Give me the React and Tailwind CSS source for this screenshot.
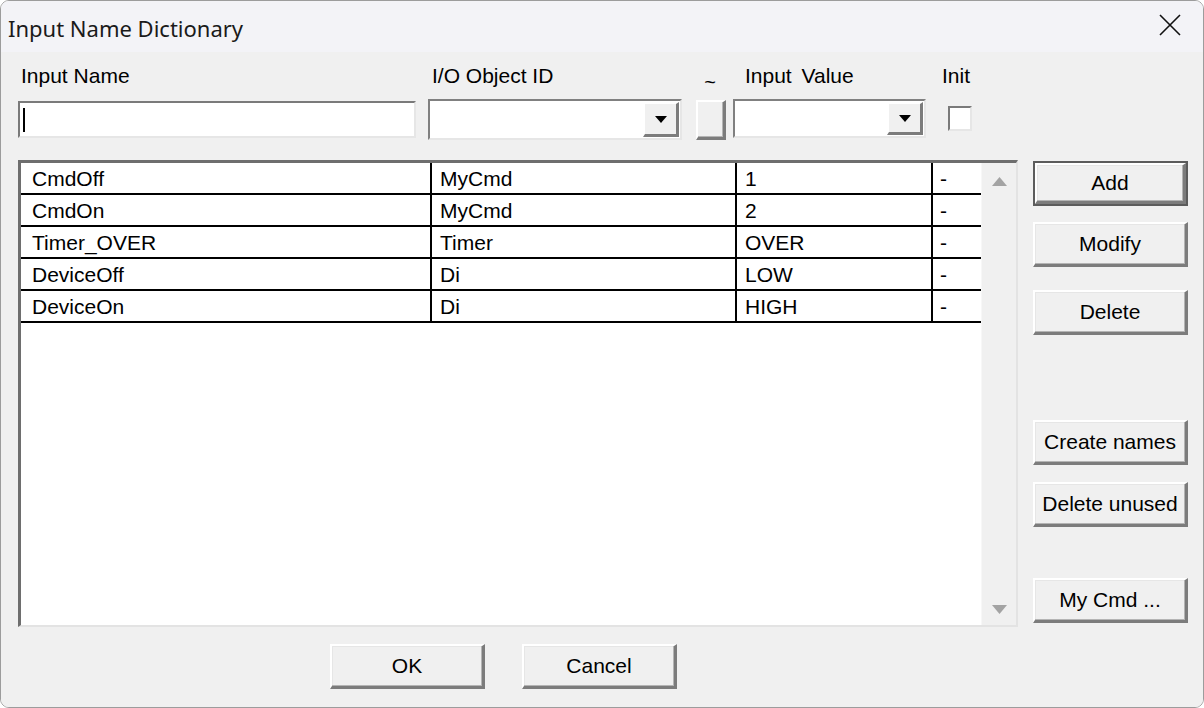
import React from 'react';

const font = { fontFamily: '"Liberation Sans", Arial, sans-serif' };

const rows = [
    ['CmdOff', 'MyCmd', '1', '-'],
    ['CmdOn', 'MyCmd', '2', '-'],
    ['Timer_OVER', 'Timer', 'OVER', '-'],
    ['DeviceOff', 'Di', 'LOW', '-'],
    ['DeviceOn', 'Di', 'HIGH', '-'],
];

function Button({ children, isDefault, className = '' }) {
    return (
        <div
            className={`w-[155px] h-[45px] shrink-0 ${isDefault ? 'border-2 border-[#5c5c5c]' : ''} ${className}`}
        >
            <div className="w-full h-full border-t-2 border-l-2 border-b-[3px] border-r-[3px] border-t-white border-l-white border-b-[#7c7c7c] border-r-[#7c7c7c] bg-[#f0f0f0] flex items-center justify-center text-[21px] text-black shadow-[inset_-1px_-1px_0_#b4b4b4,inset_1px_1px_0_#e6e6e6]">
                {children}
            </div>
        </div>
    );
}

function Arrow({ color = '#000', up = false, w = 12, h = 7 }) {
    return (
        <svg width={w} height={h} viewBox={`0 0 ${w} ${h}`}>
            <path d={up ? `M0 ${h} L${w / 2} 0 L${w} ${h} Z` : `M0 0 L${w} 0 L${w / 2} ${h} Z`} fill={color} />
        </svg>
    );
}

function Combo({ width, height }) {
    return (
        <div
            className="border-t-2 border-l-2 border-t-[#808080] border-l-[#808080] border-b-2 border-r-2 border-b-[#e6e6e6] border-r-[#e6e6e6] bg-white flex justify-end p-[1px]"
            style={{ width, height }}
        >
            <div className="w-[36px] h-full border-t-2 border-l-2 border-t-white border-l-white border-b-[3px] border-r-[3px] border-b-[#7c7c7c] border-r-[#7c7c7c] bg-[#f0f0f0] flex items-center justify-center">
                <Arrow />
            </div>
        </div>
    );
}

export default function App() {
    return (
        <div className="w-[1204px] h-[708px] bg-white" style={font}>
            <div className="w-full h-full border border-[#9c9c9c] rounded-[9px] overflow-hidden flex flex-col">
                {/* Title bar */}
                <div className="h-[51px] shrink-0 bg-[#f3f3f7] flex items-center justify-between pl-[7px] pr-[22px]">
                    <span
                        className="text-[22px] text-[#1a1a1a] pt-[4px]"
                        style={{ fontFamily: '"Noto Sans", "Open Sans", sans-serif' }}
                    >
                        Input Name Dictionary
                    </span>
                    <svg width="22" height="22" viewBox="0 0 22 22" className="mb-[4px]">
                        <path d="M1 1 L21 21 M21 1 L1 21" stroke="#111" strokeWidth="1.6" />
                    </svg>
                </div>

                {/* Body */}
                <div className="flex-1 bg-[#f0f0f0] flex flex-col">
                    {/* Top fields */}
                    <div className="h-[108px] shrink-0 flex pt-[12px] pl-[17px] text-[21px] text-black leading-[24px]">
                        <div className="w-[398px] flex flex-col">
                            <span className="pl-[3px]">Input Name</span>
                            <div className="mt-[13px] h-[37px] border-t-2 border-l-2 border-t-[#7a7a7a] border-l-[#7a7a7a] border-b-2 border-r-2 border-b-[#e6e6e6] border-r-[#e6e6e6] bg-white flex items-center pl-[3px]">
                                <div className="w-[2px] h-[24px] bg-black" />
                            </div>
                        </div>
                        <div className="ml-[12px] w-[254px] flex flex-col">
                            <span className="pl-[4px]">I/O Object ID</span>
                            <div className="mt-[11px]">
                                <Combo width={254} height={41} />
                            </div>
                        </div>
                        <div className="ml-[14px] w-[30px] flex flex-col items-center">
                            <span className="text-[20px] h-[24px] pt-[6px] pr-[2px]">~</span>
                            <div className="mt-[12px] w-[30px] h-[40px] border-t-2 border-l-2 border-t-white border-l-white border-b-[3px] border-r-[3px] border-b-[#7c7c7c] border-r-[#7c7c7c] bg-[#f0f0f0] shadow-[inset_-1px_-1px_0_#b4b4b4]" />
                        </div>
                        <div className="ml-[7px] w-[193px] flex flex-col">
                            <span className="pl-[12px]" style={{ wordSpacing: '4px' }}>Input Value</span>
                            <div className="mt-[11px]">
                                <Combo width={193} height={39} />
                            </div>
                        </div>
                        <div className="ml-[16px] flex flex-col">
                            <span>Init</span>
                            <div className="mt-[18px] ml-[6px] w-[24px] h-[25px] border-t-2 border-l-2 border-t-[#7a7a7a] border-l-[#7a7a7a] border-b-2 border-r-2 border-b-[#e6e6e6] border-r-[#e6e6e6] bg-white" />
                        </div>
                    </div>

                    {/* List and side buttons */}
                    <div className="flex pl-[17px] text-[21px] text-black">
                        <div className="w-[1000px] h-[467px] border-t-[3px] border-l-[3px] border-t-[#6e6e6e] border-l-[#6e6e6e] border-b-2 border-r-2 border-b-[#e3e3e3] border-r-[#e3e3e3] flex">
                            <div className="flex-1 bg-white">
                                {rows.map((r, i) => (
                                    <div key={i} className="h-[32px] border-b-2 border-black grid grid-cols-[411px_305px_196px_1fr]">
                                        <div className="border-r-2 border-black pl-[11px] flex items-center">{r[0]}</div>
                                        <div className="border-r-2 border-black pl-[8px] flex items-center">{r[1]}</div>
                                        <div className="border-r-2 border-black pl-[8px] flex items-center">{r[2]}</div>
                                        <div className="pl-[7px] flex items-center">{r[3]}</div>
                                    </div>
                                ))}
                            </div>
                            <div className="w-[35px] bg-[#f0f0f0] border-l border-[#f7f7f7] flex flex-col items-center justify-between pt-[14px] pb-[11px]">
                                <Arrow up color="#a3a3a3" w={15} h={9} />
                                <Arrow color="#a3a3a3" w={15} h={9} />
                            </div>
                        </div>
                        <div className="ml-[15px] pt-[1px] flex flex-col">
                            <Button isDefault>Add</Button>
                            <Button className="mt-[16px]">Modify</Button>
                            <Button className="mt-[23px]">Delete</Button>
                            <Button className="mt-[85px]">Create names</Button>
                            <Button className="mt-[17px]">Delete unused</Button>
                            <Button className="mt-[51px]">My Cmd ...</Button>
                        </div>
                    </div>

                    {/* Bottom buttons */}
                    <div className="flex pl-[329px] mt-[17px] text-[21px]">
                        <Button>OK</Button>
                        <Button className="ml-[37px]">Cancel</Button>
                    </div>
                </div>
            </div>
        </div>
    );
}
